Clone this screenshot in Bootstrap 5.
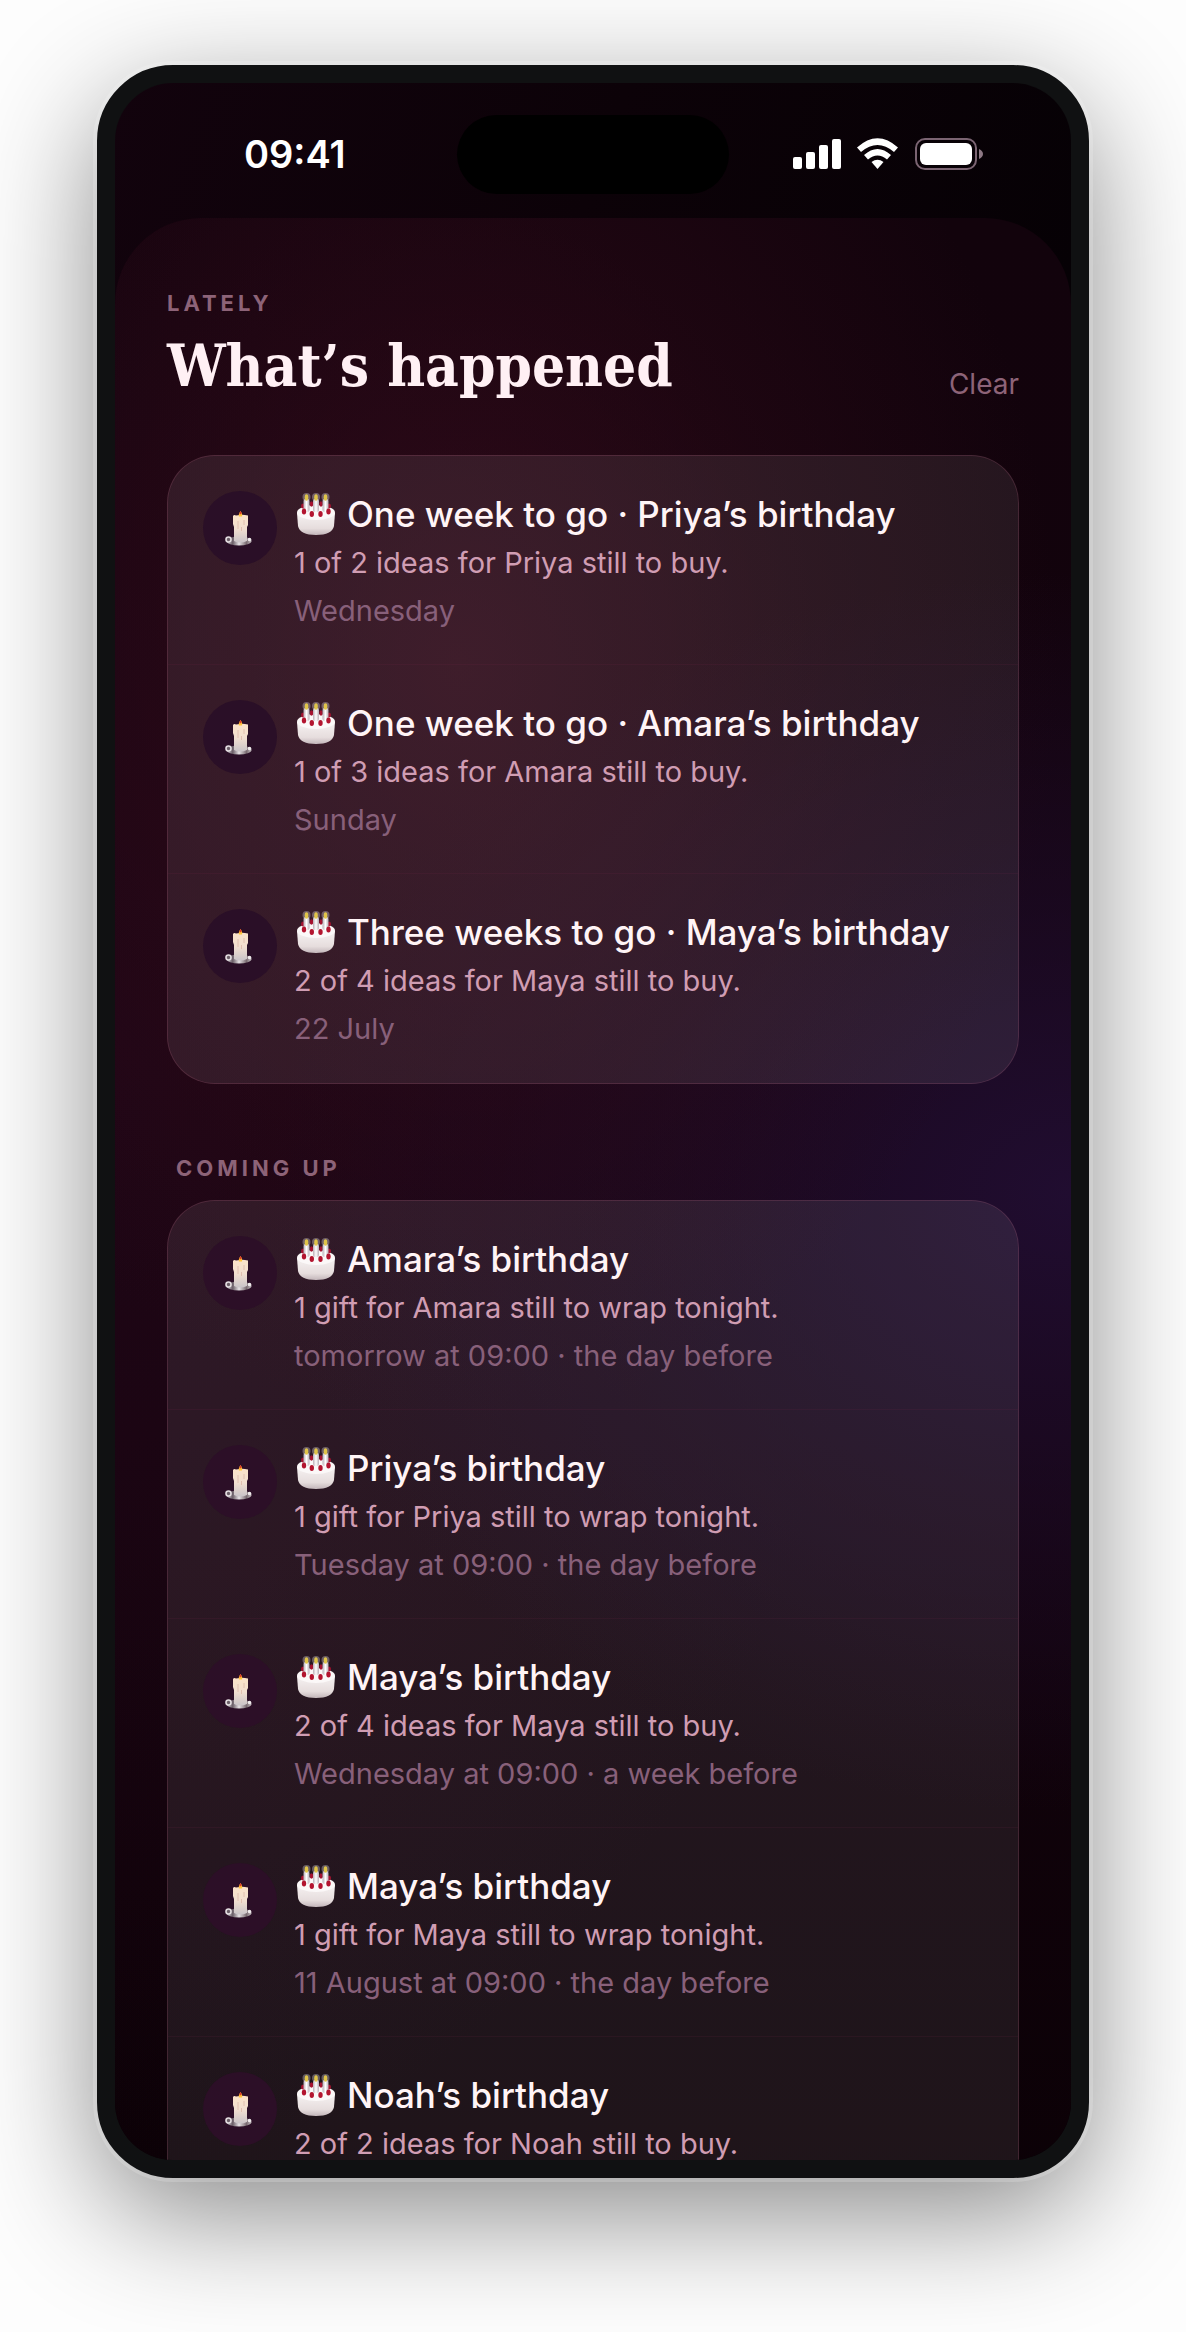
<!DOCTYPE html>
<html lang="en">
<head>
<meta charset="utf-8">
<meta name="viewport" content="width=device-width, initial-scale=1">
<title>What’s happened</title>
<link href="https://cdn.jsdelivr.net/npm/bootstrap@5.3.0/dist/css/bootstrap.min.css" rel="stylesheet">
<style>
  body { background: #fdfdfd; font-family: Inter, "Liberation Sans", sans-serif; color: #fdf0f4; }
  .stage { padding: 65px 97px 154px; }
  .phone {
    width: 100%; max-width: 992px; aspect-ratio: 992 / 2113;
    border: 18px solid #101112; border-radius: 76px;
    background: #101112;
    box-shadow: 0 0 0 4px rgba(255,255,255,.18), 0 36px 120px rgba(0,0,0,.46);
  }
  .screen {
    border-radius: 58px;
    background: linear-gradient(110deg, #12030d 0%, #0c0208 30%, #060105 60%);
  }
  .statusbar { height: 135px; padding: 7px 88px 0; }
  .clock { font-size: 38px; font-weight: 600; color: #fff; line-height: 48px; padding-left: 41px; }
  .island { width: 272px; height: 79px; border-radius: 40px; background: #000; }
  .sheet {
    border-radius: 86px 86px 0 0; padding: 70px 52px 0;
    background:
      radial-gradient(600px 760px at 36% 22%, rgba(54,12,28,.75) 0%, rgba(50,11,26,.4) 50%, rgba(40,8,24,0) 100%),
      radial-gradient(800px 620px at 100% 48%, rgba(34,14,52,.9) 0%, rgba(32,13,46,.55) 45%, rgba(28,8,34,0) 100%),
      radial-gradient(760px 1100px at 0% 42%, rgba(40,8,28,.6) 0%, rgba(28,5,20,0) 100%),
      linear-gradient(180deg, #12030c 0%, #13030d 60%, #0b0106 100%);
  }
  .eyebrow { font-size: 22px; font-weight: 700; line-height: 30px; letter-spacing: 4px; color: #8d6378; }
  .headline { font-family: "DejaVu Serif Condensed", "DejaVu Serif", serif; font-weight: 700; font-size: 58px; line-height: 72px; margin: 12px 0 0; color: #fff0f4; }
  .clear-btn { font-size: 28px; line-height: 36px; color: #8d6378; background: none; border: 0; padding: 0; }
  .panel { border: 1px solid rgba(170,90,120,.24); border-radius: 48px; background: rgba(255,255,255,.078); }
  .panel-first { margin-top: 53px; }
  .section-label { margin: 69px 0 17px; padding-left: 9px; }
  .entry { height: 209px; padding: 35px 35px 33px; gap: 17px; border-bottom: 1px solid rgba(120,40,80,.13); }
  .entry:last-child { border-bottom-color: transparent; }
  .dot { width: 74px; height: 74px; padding-right: 4px; background: #2a0f27; }
  .dot-next { background: #2c0f27; }
  .entry-title { font-size: 35px; font-weight: 500; line-height: 46px; gap: 12px; color: #fff4f6; margin: 0; padding-left: 3px; }
  .entry-note { font-size: 29px; line-height: 44px; margin: 4px 0 0; color: #d09db3; }
  .entry-when { font-size: 29px; line-height: 40px; margin: 6px 0 0; color: #88607a; }
</style>
<script src="https://cdn.jsdelivr.net/npm/bootstrap@5.3.0/dist/js/bootstrap.bundle.min.js"></script>
</head>
<body>
<svg width="0" height="0" class="position-absolute" aria-hidden="true">
  <defs>
    <linearGradient id="wax" x1="0" y1="0" x2="0" y2="1"><stop offset="0" stop-color="#fbe3c8"/><stop offset=".5" stop-color="#f2dfd0"/><stop offset="1" stop-color="#c9c4c8"/></linearGradient>
    <linearGradient id="plate" x1="0" y1="0" x2="1" y2="0"><stop offset="0" stop-color="#cfcacf"/><stop offset=".25" stop-color="#6b5f68"/><stop offset=".5" stop-color="#e6e2e4"/><stop offset=".8" stop-color="#77696f"/><stop offset="1" stop-color="#c8c0c4"/></linearGradient>
    <linearGradient id="icing" x1="0" y1="0" x2="0" y2="1"><stop offset="0" stop-color="#f6f2f2"/><stop offset=".7" stop-color="#e6dddd"/><stop offset="1" stop-color="#c3b6ba"/></linearGradient>
    <linearGradient id="stick" x1="0" y1="0" x2="1" y2="0"><stop offset="0" stop-color="#b9aeb6"/><stop offset=".5" stop-color="#fff"/><stop offset="1" stop-color="#b9aeb6"/></linearGradient>
    <symbol id="candle" viewBox="0 0 27 35">
      <ellipse cx="14" cy="30" rx="12.500" ry="4.500" fill="url(#plate)"/>
      <circle cx="3.500" cy="28.500" r="2.500" fill="#6b5f68" stroke="#e3dde0" stroke-width="1.600"/>
      <circle cx="24.500" cy="28.500" r="1.800" fill="#efeaec"/>
      <path d="M8 5 Q9 3.500 11 4.500 L15 4 Q18 3.500 23 4.500 L23 14 L22 16 L22 30 Q15 33 9 30 L9 16 L8 13Z" fill="url(#wax)"/>
      <path d="M13 10v8M19 9v5M16.500 16v4" stroke="#dcb7a8" stroke-width=".8"/>
      <path d="M15.500 0 Q18 3.500 16.800 5.500 H14 Q13 3.500 15.500 0Z" fill="#ffc53a"/>
      <path d="M15.500 0 Q17.200 2 16.300 3.200 H14.500 Q14.300 2 15.500 0Z" fill="#e03b28"/>
    </symbol>
    <symbol id="cake" viewBox="0 0 38 43">
      <path d="M0 20 L1 33 Q3 42 19 42 Q35 42 37 33 L38 20Z" fill="url(#icing)"/>
      <ellipse cx="19" cy="19.500" rx="19" ry="7.500" fill="#fbf8f8"/>
      <g fill="#a5122f"><ellipse cx="14.500" cy="11" rx="1.700" ry="2.800"/><ellipse cx="24" cy="11" rx="1.700" ry="2.800"/><ellipse cx="32" cy="13" rx="2" ry="2.500"/><ellipse cx="6" cy="13" rx="2" ry="2.500"/></g>
      <g fill="#fff" opacity=".3"><circle cx="9.500" cy="4" r="4"/><circle cx="19" cy="4" r="4"/><circle cx="28.500" cy="4" r="4"/></g>
      <g fill="url(#stick)"><rect x="6.500" y="6" width="6" height="13" rx="2"/><rect x="16" y="6" width="6" height="13" rx="2"/><rect x="25.500" y="6" width="6" height="13" rx="2"/></g>
      <g fill="#e0c44a"><ellipse cx="9.500" cy="4.500" rx="1.800" ry="3.200"/><ellipse cx="19" cy="4.500" rx="1.800" ry="3.200"/><ellipse cx="28.500" cy="4.500" rx="1.800" ry="3.200"/></g>
      <g fill="#b3142f"><ellipse cx="7" cy="18.500" rx="2.200" ry="2.900"/><ellipse cx="14.800" cy="21" rx="2.200" ry="2.900"/><ellipse cx="23.500" cy="21" rx="2.200" ry="2.900"/><ellipse cx="31.500" cy="18.500" rx="2.200" ry="2.900"/></g>
    </symbol>
  </defs>
</svg>

<div class="stage d-flex justify-content-center">
  <div class="phone">
    <div class="screen h-100 overflow-hidden d-flex flex-column">
      <header class="statusbar d-flex align-items-center flex-shrink-0">
        <div class="col"><div class="clock">09:41</div></div>
        <div class="island flex-shrink-0"></div>
        <div class="col d-flex justify-content-end align-items-center">
          <svg width="190" height="32" viewBox="0 0 190 32" aria-label="Signal, Wi-Fi and battery" role="img">
            <g fill="#fff">
              <rect x="0" y="19" width="9" height="12" rx="2"/><rect x="13" y="14" width="9" height="17" rx="2"/><rect x="26" y="7" width="9" height="24" rx="2"/><rect x="39" y="1" width="9" height="30" rx="2"/>
              <path d="M64 9.500 Q84.500 -9 105 9.500 L101 14 Q84.500 0 68 14Z"/>
              <path d="M71 17 Q84.500 5 98 17 L94 21.500 Q84.500 13.500 75 21.500Z"/>
              <path d="M78.500 24 Q84.500 19.500 90.500 24 L84.500 31Z"/>
              <rect x="127" y="5" width="52" height="22" rx="6"/>
            </g>
            <rect x="123" y="1" width="60" height="30" rx="9" fill="none" stroke="#7b6472" stroke-width="2"/>
            <path d="M186 11 Q190 13 190 16 Q190 19 186 21Z" fill="#8d7884"/>
          </svg>
        </div>
      </header>

      <main class="sheet flex-grow-1">
        <div class="d-flex justify-content-between align-items-end">
          <div>
            <div class="eyebrow">LATELY</div>
            <h1 class="headline">What’s happened</h1>
          </div>
          <button type="button" class="clear-btn">Clear</button>
        </div>

        <ul class="panel panel-first list-unstyled mb-0">
          <li class="entry d-flex">
            <span class="dot rounded-circle d-flex align-items-center justify-content-center flex-shrink-0"><svg width="27" height="35" aria-hidden="true"><use href="#candle"/></svg></span>
            <div>
              <h2 class="entry-title d-flex align-items-center"><svg width="38" height="43" aria-hidden="true"><use href="#cake"/></svg>One week to go · Priya’s birthday</h2>
              <p class="entry-note">1 of 2 ideas for Priya still to buy.</p>
              <p class="entry-when">Wednesday</p>
            </div>
          </li>
          <li class="entry d-flex">
            <span class="dot rounded-circle d-flex align-items-center justify-content-center flex-shrink-0"><svg width="27" height="35" aria-hidden="true"><use href="#candle"/></svg></span>
            <div>
              <h2 class="entry-title d-flex align-items-center"><svg width="38" height="43" aria-hidden="true"><use href="#cake"/></svg>One week to go · Amara’s birthday</h2>
              <p class="entry-note">1 of 3 ideas for Amara still to buy.</p>
              <p class="entry-when">Sunday</p>
            </div>
          </li>
          <li class="entry d-flex">
            <span class="dot rounded-circle d-flex align-items-center justify-content-center flex-shrink-0"><svg width="27" height="35" aria-hidden="true"><use href="#candle"/></svg></span>
            <div>
              <h2 class="entry-title d-flex align-items-center"><svg width="38" height="43" aria-hidden="true"><use href="#cake"/></svg>Three weeks to go · Maya’s birthday</h2>
              <p class="entry-note">2 of 4 ideas for Maya still to buy.</p>
              <p class="entry-when">22 July</p>
            </div>
          </li>
        </ul>

        <div class="eyebrow section-label">COMING UP</div>

        <ul class="panel list-unstyled mb-0">
          <li class="entry d-flex">
            <span class="dot dot-next rounded-circle d-flex align-items-center justify-content-center flex-shrink-0"><svg width="27" height="35" aria-hidden="true"><use href="#candle"/></svg></span>
            <div>
              <h2 class="entry-title d-flex align-items-center"><svg width="38" height="43" aria-hidden="true"><use href="#cake"/></svg>Amara’s birthday</h2>
              <p class="entry-note">1 gift for Amara still to wrap tonight.</p>
              <p class="entry-when">tomorrow at 09:00 · the day before</p>
            </div>
          </li>
          <li class="entry d-flex">
            <span class="dot dot-next rounded-circle d-flex align-items-center justify-content-center flex-shrink-0"><svg width="27" height="35" aria-hidden="true"><use href="#candle"/></svg></span>
            <div>
              <h2 class="entry-title d-flex align-items-center"><svg width="38" height="43" aria-hidden="true"><use href="#cake"/></svg>Priya’s birthday</h2>
              <p class="entry-note">1 gift for Priya still to wrap tonight.</p>
              <p class="entry-when">Tuesday at 09:00 · the day before</p>
            </div>
          </li>
          <li class="entry d-flex">
            <span class="dot dot-next rounded-circle d-flex align-items-center justify-content-center flex-shrink-0"><svg width="27" height="35" aria-hidden="true"><use href="#candle"/></svg></span>
            <div>
              <h2 class="entry-title d-flex align-items-center"><svg width="38" height="43" aria-hidden="true"><use href="#cake"/></svg>Maya’s birthday</h2>
              <p class="entry-note">2 of 4 ideas for Maya still to buy.</p>
              <p class="entry-when">Wednesday at 09:00 · a week before</p>
            </div>
          </li>
          <li class="entry d-flex">
            <span class="dot dot-next rounded-circle d-flex align-items-center justify-content-center flex-shrink-0"><svg width="27" height="35" aria-hidden="true"><use href="#candle"/></svg></span>
            <div>
              <h2 class="entry-title d-flex align-items-center"><svg width="38" height="43" aria-hidden="true"><use href="#cake"/></svg>Maya’s birthday</h2>
              <p class="entry-note">1 gift for Maya still to wrap tonight.</p>
              <p class="entry-when">11 August at 09:00 · the day before</p>
            </div>
          </li>
          <li class="entry d-flex">
            <span class="dot dot-next rounded-circle d-flex align-items-center justify-content-center flex-shrink-0"><svg width="27" height="35" aria-hidden="true"><use href="#candle"/></svg></span>
            <div>
              <h2 class="entry-title d-flex align-items-center"><svg width="38" height="43" aria-hidden="true"><use href="#cake"/></svg>Noah’s birthday</h2>
              <p class="entry-note">2 of 2 ideas for Noah still to buy.</p>
            </div>
          </li>
        </ul>
      </main>
    </div>
  </div>
</div>
</body>
</html>
